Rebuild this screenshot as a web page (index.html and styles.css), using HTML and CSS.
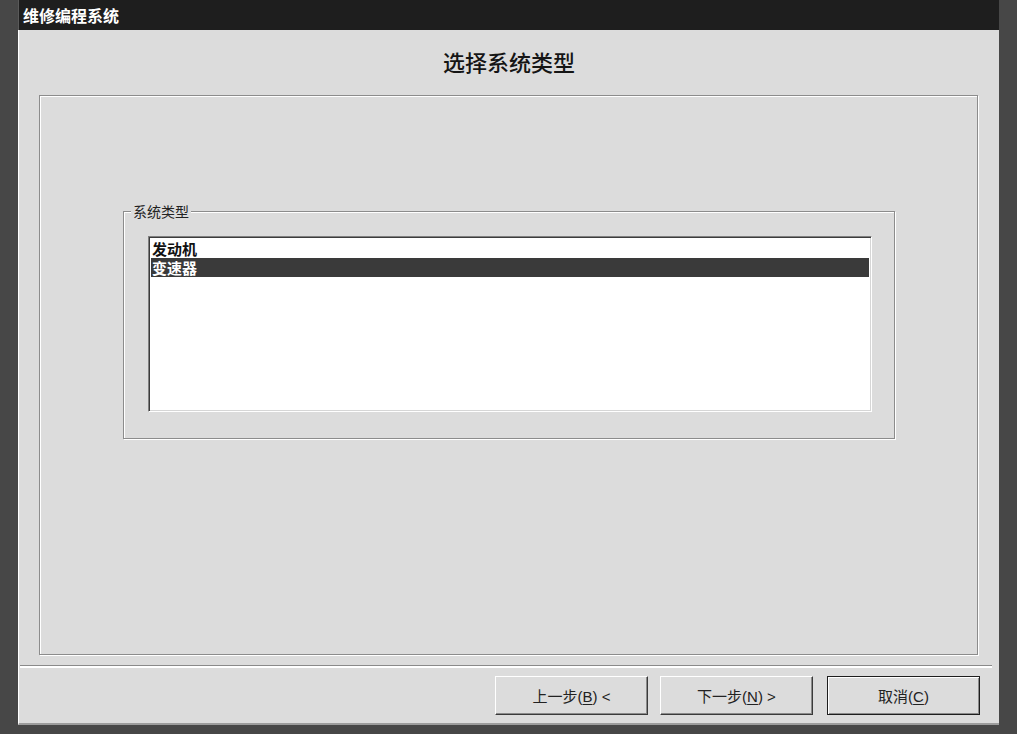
FILE: index.html
```html
<!DOCTYPE html>
<html lang="zh-CN">
<head>
<meta charset="utf-8">
<title>维修编程系统</title>
<link rel="stylesheet" href="styles.css">
</head>
<body>
<div class="window">
  <div class="titlebar">维修编程系统</div>
  <div class="client">
    <div class="heading">选择系统类型</div>
    <div class="panel">
      <div class="group">
        <span class="group-label">系统类型</span>
        <div class="listbox">
          <div class="item">发动机</div>
          <div class="item selected">变速器</div>
        </div>
      </div>
    </div>
    <div class="separator"></div>
    <div class="buttons">
      <button class="btn">上一步(<u>B</u>) &lt;</button>
      <button class="btn btn-next">下一步(<u>N</u>) &gt;</button>
      <button class="btn btn-default">取消(<u>C</u>)</button>
    </div>
  </div>
</div>
</body>
</html>
```

FILE: styles.css
```css
html, body {
  margin: 0;
  padding: 0;
}
body {
  width: 1017px;
  height: 734px;
  background: #474747;
  font-family: "Liberation Sans", "Noto Sans CJK SC", sans-serif;
  overflow: hidden;
}
.window {
  margin-left: 18px;
  width: 981px;
  height: 725px;
  display: flex;
  flex-direction: column;
}
.titlebar {
  height: 30px;
  line-height: 30px;
  background: #1e1e1e;
  color: #ffffff;
  font-family: "Noto Sans CJK SC", sans-serif;
  font-size: 16px;
  font-weight: 700;
  padding-left: 4px;
  border-left: 1px solid #5a5a5a;
}
.client {
  flex: 1;
  display: flex;
  flex-direction: column;
  background: #dcdcdc;
  border-left: 1px solid #ffffff;
  border-bottom: 2px solid #9c9c9c;
}
.heading {
  height: 65px;
  line-height: 63px;
  text-align: center;
  font-family: "Noto Sans CJK SC", sans-serif;
  font-size: 22px;
  font-weight: 500;
  color: #151515;
}
.panel {
  box-sizing: border-box;
  margin-left: 20px;
  width: 939px;
  height: 560px;
  border: 1px solid #8c8c8c;
  box-shadow: inset 1px 1px 0 #ffffff, 1px 1px 0 #ffffff;
  padding: 115px 0 0 83px;
}
.group {
  position: relative;
  box-sizing: border-box;
  width: 772px;
  height: 228px;
  border: 1px solid #8c8c8c;
  box-shadow: inset 1px 1px 0 #ffffff, 1px 1px 0 #ffffff;
  padding: 24px 0 0 24px;
}
.group-label {
  position: absolute;
  left: 7px;
  top: -10px;
  padding: 0 2px;
  background: #dcdcdc;
  font-family: "Noto Sans CJK SC", sans-serif;
  font-size: 14px;
  line-height: 18px;
  color: #222222;
}
.listbox {
  box-sizing: border-box;
  width: 724px;
  height: 176px;
  background: #ffffff;
  border: 1px solid;
  border-color: #808080 #ffffff #ffffff #808080;
  box-shadow: inset 1px 1px 0 #3c3c3c, inset -1px -1px 0 #d6d6d6;
  padding: 2px 2px 0 2px;
}
.item {
  height: 19px;
  line-height: 19px;
  padding-left: 1px;
  font-family: "Noto Sans CJK SC", sans-serif;
  font-size: 15px;
  font-weight: 700;
  color: #111111;
}
.item.selected {
  background: #3a3a3a;
  color: #ffffff;
}
.separator {
  margin: 10px 7px 0 1px;
  border-top: 1px solid #8a8a8a;
  border-bottom: 2px solid #ffffff;
}
.buttons {
  display: flex;
  justify-content: flex-end;
  margin-top: 8px;
  padding-right: 19px;
}
.btn {
  box-sizing: border-box;
  width: 153px;
  height: 39px;
  margin: 0;
  padding: 0;
  background: #dcdcdc;
  font-family: "Liberation Sans", "Noto Sans CJK SC", sans-serif;
  font-size: 15px;
  color: #222222;
  border: 1px solid;
  border-color: #ffffff #3a3a3a #3a3a3a #ffffff;
  box-shadow: inset -1px -1px 0 #8a8a8a;
}
.btn u {
  text-decoration-thickness: 1px;
  text-underline-offset: 2px;
}
.btn-next {
  margin-left: 12px;
}
.btn-default {
  margin-left: 14px;
  border-color: #1e1e1e;
  box-shadow: inset 1px 1px 0 #ffffff, inset -1px -1px 0 #8a8a8a;
}
```
